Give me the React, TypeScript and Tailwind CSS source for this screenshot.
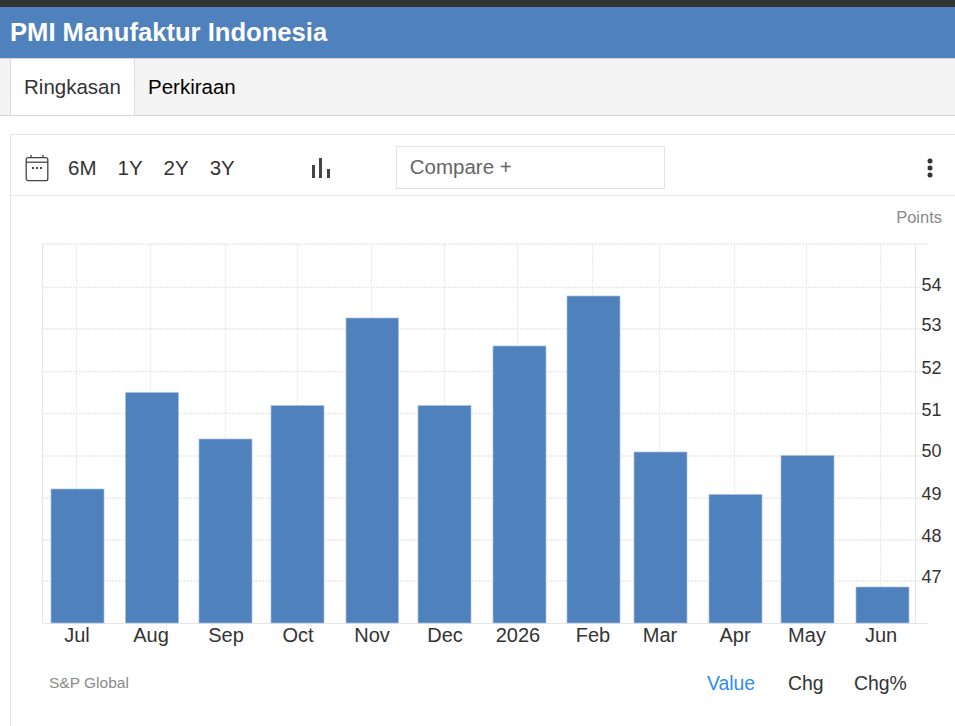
const font = { fontFamily: '"Liberation Sans", Arial, sans-serif' };

const bars = [
  { label: "Jul", x: 51, w: 53, top: 489, cx: 77 },
  { label: "Aug", x: 125.5, w: 53, top: 392.5, cx: 151 },
  { label: "Sep", x: 199, w: 53, top: 439, cx: 226 },
  { label: "Oct", x: 271, w: 53, top: 405.5, cx: 298 },
  { label: "Nov", x: 346, w: 52.5, top: 318, cx: 372 },
  { label: "Dec", x: 418, w: 53, top: 405.5, cx: 445 },
  { label: "2026", x: 493, w: 53, top: 346, cx: 518 },
  { label: "Feb", x: 567, w: 53, top: 296, cx: 593 },
  { label: "Mar", x: 634, w: 53, top: 452, cx: 660 },
  { label: "Apr", x: 709, w: 53, top: 494.5, cx: 735 },
  { label: "May", x: 781, w: 53, top: 455.5, cx: 807 },
  { label: "Jun", x: 856, w: 53, top: 587, cx: 881 },
];
const ticks = [
  { v: 54, y: 287.5, ty: 291 },
  { v: 53, y: 329, ty: 331 },
  { v: 52, y: 371.5, ty: 374 },
  { v: 51, y: 413.5, ty: 416 },
  { v: 50, y: 456, ty: 457 },
  { v: 49, y: 498, ty: 500 },
  { v: 48, y: 540, ty: 542 },
  { v: 47, y: 581, ty: 583 },
];
const grid = "#e9e9e9";

function Chart() {
  const oy = 196;
  return (
    <svg width="944" height="470" viewBox={`11 ${oy} 944 470`} className="block" style={font}>
      <text x="942" y="222.500" textAnchor="end" fontSize="16.500" fill="#8a8a8a">Points</text>
      <line x1="43" x2="915" y1="244" y2="244" stroke={grid} strokeWidth="1.300" strokeDasharray="2 1" />
      <line x1="915" x2="928" y1="244" y2="244" stroke="#e6e6e6" />
      {ticks.map((t) => (
        <line key={t.v} x1="43" x2="928" y1={t.y} y2={t.y} stroke={grid} strokeWidth="1.300" strokeDasharray="2 1" />
      ))}
      {bars.map((b) => (
        <line key={b.label} x1={b.cx - 0.5} x2={b.cx - 0.5} y1="244" y2="623" stroke={grid} strokeWidth="1.300" strokeDasharray="2 1" />
      ))}
      <line x1="42.5" x2="42.5" y1="244" y2="623" stroke="#e6e6e6" />
      <line x1="915.5" x2="915.5" y1="244" y2="623" stroke="#e6e6e6" />
      <line x1="43" x2="928" y1="623.5" y2="623.5" stroke="#e6e6e6" />
      {bars.map((b) => (
        <rect key={b.label} x={b.x} y={b.top} width={b.w} height={623 - b.top} fill="#4f81bd" stroke="#a8c0de" strokeWidth="0.700" />
      ))}
      {bars.map((b) => (
        <text key={b.label} x={b.cx} y="642" textAnchor="middle" fontSize="20" fill="#333333">{b.label}</text>
      ))}
      {ticks.map((t) => (
        <text key={t.v} x="921.500" y={t.ty} fontSize="18" fill="#333333">{t.v}</text>
      ))}
    </svg>
  );
}

function CalendarIcon() {
  return (
    <svg width="26" height="28" viewBox="0 0 26 28" fill="none" stroke="#444444" strokeWidth="1.300">
      <rect x="2.200" y="3.700" width="21.600" height="23" rx="2" />
      <path d="M2.200 8.200H23.800" />
      <path d="M7 1V4M19 1V4" />
      <path d="M8 14h2M12 14h2M16 14h2" strokeWidth="2" />
    </svg>
  );
}

function BarsIcon() {
  return (
    <svg width="20" height="20" viewBox="0 0 20 20" fill="#444444">
      <rect x="1" y="7" width="3" height="13" />
      <rect x="8" y="0" width="3" height="20" />
      <rect x="16" y="11" width="3" height="9" />
    </svg>
  );
}

export default function App() {
  return (
    <div className="w-[955px] h-[726px] overflow-hidden bg-white flex flex-col" style={font}>
      <div className="h-[7px] bg-[#333333]" />
      <div className="h-[51px] bg-[#4f81bd] flex items-center pl-[10px] text-white text-[25.600px] font-bold leading-none">
        PMI Manufaktur Indonesia
      </div>
      <div className="h-[58px] bg-[#f4f4f4] border-y border-[#d6d6d6] pl-[10px] flex text-[20.500px]">
        <div className="w-[125px] bg-white border-x border-[#dcdcdc] flex items-center justify-center text-[#333333]">Ringkasan</div>
        <div className="pl-[13px] flex items-center text-black">Perkiraan</div>
      </div>
      <div className="mt-[18px] ml-[10px] flex-1 border-l border-t border-[#e6e6e6]">
        <div className="h-[61px] pt-[4px] border-b border-[#e6e6e6] flex items-center">
          <div className="ml-[13px] mt-[2px]"><CalendarIcon /></div>
          <div className="ml-[18px] mt-[2px] flex text-[20.500px] text-[#333333] gap-[21px]">
            <span>6M</span>
            <span>1Y</span>
            <span>2Y</span>
            <span>3Y</span>
          </div>
          <div className="ml-[76px] mt-[2px]"><BarsIcon /></div>
          <div className="ml-[65px] w-[269px] h-[43px] border border-[#e4e4dc] flex items-center pl-[13px] text-[20.500px] text-[#666666]">
            Compare +
          </div>
          <svg className="ml-[261px] mt-[2px]" width="8" height="20" viewBox="0 0 8 20" fill="#333333">
            <circle cx="4" cy="3" r="2.500" />
            <circle cx="4" cy="10" r="2.500" />
            <circle cx="4" cy="17" r="2.500" />
          </svg>
        </div>
        <Chart />
        <div className="relative">
          <span className="absolute left-[38px] top-[8px] text-[15.500px] leading-[18px] text-[#8a8a8a]">S&amp;P Global</span>
          <div className="absolute left-[696px] top-[5px] flex text-[19.400px] leading-[24px]">
            <span className="text-[#2e8cf0] w-[81px]">Value</span>
            <span className="text-[#333333] w-[66px]">Chg</span>
            <span className="text-[#333333]">Chg%</span>
          </div>
        </div>
      </div>
    </div>
  );
}
